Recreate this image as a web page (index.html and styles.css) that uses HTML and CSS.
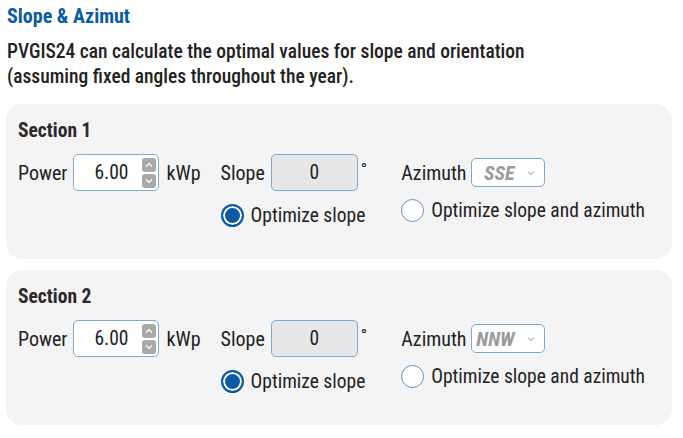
FILE: index.html
```html
<!DOCTYPE html>
<html>
<head>
<meta charset="utf-8">
<link rel="stylesheet" href="styles.css">
</head>
<body>
<div class="page">
  <h2 class="title">Slope &amp; Azimut</h2>
  <p class="intro">PVGIS24 can calculate the optimal values for slope and orientation<br>(assuming fixed angles throughout the year).</p>

  <div class="card">
    <h3 class="section">Section 1</h3>
    <div class="row">
      <div class="field">
        <span class="lbl">Power</span>
        <div class="num">
          <span class="val">6.00</span>
          <div class="spin">
            <span class="sbtn"><svg viewBox="0 0 12 12" width="12" height="12"><path d="M3 7.5 L6 4.5 L9 7.5" fill="none" stroke="#fff" stroke-width="1.2"/></svg></span>
            <span class="sbtn"><svg viewBox="0 0 12 12" width="12" height="12"><path d="M3 4.5 L6 7.5 L9 4.5" fill="none" stroke="#fff" stroke-width="1.2"/></svg></span>
          </div>
        </div>
        <span class="unit">kWp</span>
      </div>
      <div class="col">
        <div class="field">
          <span class="lbl">Slope</span>
          <div class="dis">0</div>
          <span class="deg">°</span>
        </div>
        <label class="radio"><span class="dot on"></span>Optimize slope</label>
      </div>
      <div class="col col-az">
        <div class="field">
          <span class="lbl">Azimuth</span>
          <div class="sel"><span class="selv">SSE</span><svg viewBox="0 0 10 10" width="10" height="10"><path d="M2 3.5 L5 6.5 L8 3.5" fill="none" stroke="#888" stroke-width="1"/></svg></div>
        </div>
        <label class="radio"><span class="dot"></span>Optimize slope and azimuth</label>
      </div>
    </div>
  </div>

  <div class="card">
    <h3 class="section">Section 2</h3>
    <div class="row">
      <div class="field">
        <span class="lbl">Power</span>
        <div class="num">
          <span class="val">6.00</span>
          <div class="spin">
            <span class="sbtn"><svg viewBox="0 0 12 12" width="12" height="12"><path d="M3 7.5 L6 4.5 L9 7.5" fill="none" stroke="#fff" stroke-width="1.2"/></svg></span>
            <span class="sbtn"><svg viewBox="0 0 12 12" width="12" height="12"><path d="M3 4.5 L6 7.5 L9 4.5" fill="none" stroke="#fff" stroke-width="1.2"/></svg></span>
          </div>
        </div>
        <span class="unit">kWp</span>
      </div>
      <div class="col">
        <div class="field">
          <span class="lbl">Slope</span>
          <div class="dis">0</div>
          <span class="deg">°</span>
        </div>
        <label class="radio"><span class="dot on"></span>Optimize slope</label>
      </div>
      <div class="col col-az">
        <div class="field">
          <span class="lbl">Azimuth</span>
          <div class="sel"><span class="selv">NNW</span><svg viewBox="0 0 10 10" width="10" height="10"><path d="M2 3.5 L5 6.5 L8 3.5" fill="none" stroke="#888" stroke-width="1"/></svg></div>
        </div>
        <label class="radio"><span class="dot"></span>Optimize slope and azimuth</label>
      </div>
    </div>
  </div>
</div>
</body>
</html>
```

FILE: styles.css
```css
* { box-sizing: border-box; }
body {
  margin: 0;
  background: #fff;
  font-family: Roboto, "Liberation Sans", sans-serif;
  font-stretch: condensed;
  color: #222;
}
.page {
  padding: 4px 11px 0 6px;
}
.title {
  margin: 0 0 0 1px;
  font-size: 20px;
  line-height: 25px;
  font-weight: 700;
  color: #0b5aa6;
}
.intro {
  margin: 10px 0 15px 1px;
  font-size: 19.5px;
  line-height: 25px;
  font-weight: 500;
  color: #222;
}
.card {
  background: #f4f4f4;
  border-radius: 16px;
  padding: 14px 12px 0 12px;
  margin-bottom: 11px;
  height: 155px;
}
.section {
  margin: 0 0 10px 0;
  font-size: 19.5px;
  line-height: 26px;
  font-weight: 700;
  color: #2a2a2a;
}
.row {
  display: flex;
  align-items: flex-start;
}
.field {
  display: flex;
  align-items: center;
  height: 37px;
}
.lbl {
  font-size: 20px;
  margin-right: 6px;
}
.num {
  width: 86px;
  height: 37px;
  background: #fff;
  border: 1px solid #7ba9d3;
  border-radius: 5px;
  display: flex;
  align-items: center;
  justify-content: flex-end;
  padding-right: 2px;
}
.val {
  font-size: 19.5px;
  margin-right: 14px;
}
.spin {
  display: flex;
  flex-direction: column;
  gap: 2px;
}
.sbtn {
  width: 14px;
  height: 14px;
  background: #a9a9a9;
  border-radius: 3px;
  display: flex;
  align-items: center;
  justify-content: center;
}
.unit {
  font-size: 20px;
  margin-left: 7px;
  margin-right: 20px;
}
.col {
  display: flex;
  flex-direction: column;
}
.dis {
  width: 87px;
  height: 37px;
  background: #e7e7e7;
  border: 1px solid #7ba9d3;
  border-radius: 5px;
  display: flex;
  align-items: center;
  justify-content: center;
  font-size: 19.5px;
}
.deg {
  align-self: flex-start;
  font-size: 17px;
  margin-left: 3px;
  margin-top: 5px;
  margin-right: 34px;
}
.sel {
  width: 74px;
  height: 29px;
  background: #fff;
  border: 1px solid #7ba9d3;
  border-radius: 5px;
  display: flex;
  align-items: center;
  justify-content: flex-end;
  padding-right: 8px;
  margin-left: -2px;
}
.selv {
  font-size: 20px;
  font-weight: 700;
  font-style: italic;
  color: #9a9a9a;
  margin-right: 11px;
}
.radio {
  display: flex;
  align-items: center;
  font-size: 19.5px;
  margin-top: 13px;
}
.col-az .radio {
  margin-top: 8px;
}
.dot {
  width: 23px;
  height: 23px;
  border-radius: 50%;
  border: 1px solid #5f92c6;
  background: #fff;
  margin-right: 7px;
}
.dot.on {
  border: 2px solid #0b5aa6;
  box-shadow: inset 0 0 0 2px #fff;
  background: #0b5aa6;
}
```
